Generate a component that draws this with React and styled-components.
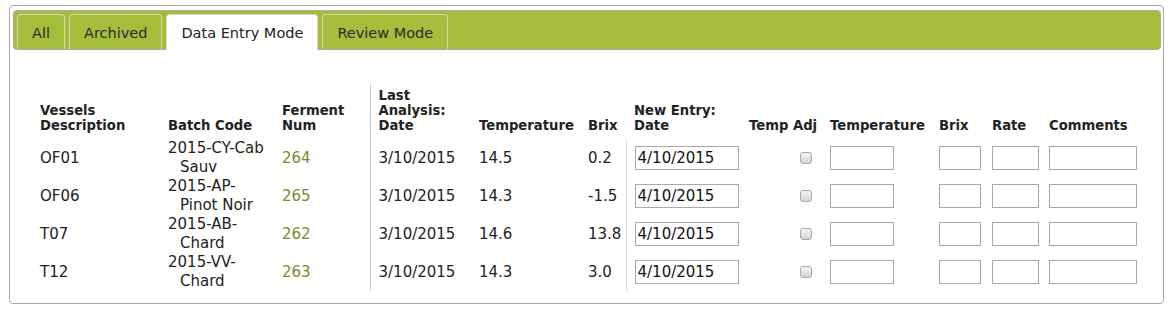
import React from 'react'
import styled, { createGlobalStyle } from "styled-components";

const GlobalStyle = createGlobalStyle`
    body{
        margin: 0;
        background: #fff;
        font-family: "DejaVu Sans", Verdana, sans-serif;
        color: #222;
    }
`
const PANEL = styled.div`
    box-sizing: border-box;
    width: 1155px;
    margin: 5px 0 0 9px;
    padding: 4px 2px 12px 3px;
    border: 1px solid #aaa;
    border-radius: 4px;
`
const TABBAR = styled.div`
    display: flex;
    gap: 4px;
    padding: 4px 3px 0;
    box-sizing: border-box;
    height: 40px;
    background: #a5bd3b;
    border: 1px solid #aaa;
    border-radius: 4px;
    align-items: flex-end;
`
const TAB = styled.div`
    height: ${p => p.$active ? '36px' : '35px'};
    margin-bottom: ${p => p.$active ? '-1px' : '0'};
    box-sizing: border-box;
    padding: 3px 14px 0;
    line-height: 31px;
    font-size: 14.5px;
    color: ${p => p.$active ? '#222' : '#2b2b2b'};
    background: ${p => p.$active ? '#fff' : '#a5bd3b'};
    border: 1px solid ${p => p.$active ? '#d8d8d8' : '#d2dcaa'};
    border-bottom: 0;
    border-radius: 4px 4px 0 0;
    white-space: nowrap;
`
const TABLE = styled.table`
    margin: 33px 0 0 19px;
    border-collapse: collapse;
    table-layout: fixed;
    width: 1113px;
    th{
        padding: 5px 8px 6px;
        font-size: 13.2px;
        line-height: 15px;
        font-weight: bold;
        text-align: left;
        vertical-align: bottom;
        color: #222;
        white-space: nowrap;
    }
    td{
        height: 38px;
        padding: 0 8px;
        font-size: 15px;
        line-height: 19px;
        vertical-align: middle;
        white-space: nowrap;
    }
    .split{
        border-left: 1px solid #ccc;
    }
    .entry{
        border-left: 1px solid #ddd;
    }
`
const BATCH = styled.td`
    && {
        padding-left: 20px;
        text-indent: -12px;
        white-space: normal;
    }
`
const FERMENT = styled.td`
    color: #7d8a2c;
`
const CHECKCELL = styled.td`
    && {
        text-align: right;
        padding-right: 10px;
    }
`
const TEXTBOX = styled.input`
    display: block;
    box-sizing: border-box;
    width: ${p => p.$w}px;
    height: 24px;
    margin: 0;
    padding: 0 2px;
    border: 1px solid #a9a9a9;
    border-radius: 0;
    font-family: "DejaVu Sans", Verdana, sans-serif;
    font-size: 15px;
    color: #111;
    outline: none;
`
const CHECK = styled.input`
    appearance: none;
    width: 12px;
    height: 12px;
    margin: 0;
    vertical-align: middle;
    border: 1px solid #aaa;
    border-radius: 3px;
    background: linear-gradient(#f4f4f4, #d4d4d4);
`

const cols = [128, 114, 96, 101, 109, 46, 115, 81, 109, 53, 57, 104]

const rows = [
    { vessel: 'OF01', batch: '2015-CY-Cab Sauv', num: 264, date: '3/10/2015', temp: '14.5', brix: '0.2' },
    { vessel: 'OF06', batch: '2015-AP-Pinot Noir', num: 265, date: '3/10/2015', temp: '14.3', brix: '-1.5' },
    { vessel: 'T07', batch: '2015-AB-Chard', num: 262, date: '3/10/2015', temp: '14.6', brix: '13.8' },
    { vessel: 'T12', batch: '2015-VV-Chard', num: 263, date: '3/10/2015', temp: '14.3', brix: '3.0' },
]

const tabs = ['All', 'Archived', 'Data Entry Mode', 'Review Mode']

export default function App() {
    return (
        <PANEL>
            <GlobalStyle />
            <TABBAR>
                {tabs.map(t => <TAB key={t} $active={t === 'Data Entry Mode'}>{t}</TAB>)}
            </TABBAR>
            <TABLE>
                <colgroup>
                    {cols.map((w, i) => <col key={i} style={{ width: w }} />)}
                </colgroup>
                <thead>
                    <tr>
                        <th>Vessels<br />Description</th>
                        <th>Batch Code</th>
                        <th>Ferment<br />Num</th>
                        <th className="split">Last<br />Analysis:<br />Date</th>
                        <th>Temperature</th>
                        <th>Brix</th>
                        <th>New Entry:<br />Date</th>
                        <th>Temp Adj</th>
                        <th>Temperature</th>
                        <th>Brix</th>
                        <th>Rate</th>
                        <th>Comments</th>
                    </tr>
                </thead>
                <tbody>
                    {rows.map(r => (
                        <tr key={r.vessel}>
                            <td>{r.vessel}</td>
                            <BATCH>{r.batch.replace(/-(?=[A-Z][a-z])/, '-\u200b')}</BATCH>
                            <FERMENT>{r.num}</FERMENT>
                            <td className="split">{r.date}</td>
                            <td>{r.temp}</td>
                            <td>{r.brix}</td>
                            <td className="entry"><TEXTBOX defaultValue="4/10/2015" $w={104} /></td>
                            <CHECKCELL><CHECK type="checkbox" /></CHECKCELL>
                            <td><TEXTBOX $w={64} /></td>
                            <td><TEXTBOX $w={42} /></td>
                            <td><TEXTBOX $w={47} /></td>
                            <td><TEXTBOX $w={88} /></td>
                        </tr>
                    ))}
                </tbody>
            </TABLE>
        </PANEL>
    )
}
